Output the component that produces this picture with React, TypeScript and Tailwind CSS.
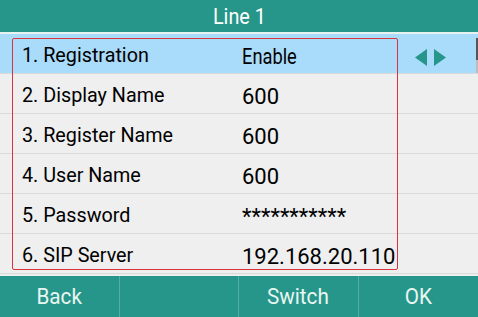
import React from 'react';

const rows = [
  { label: '1. Registration', value: 'Enable', narrow: true },
  { label: '2. Display Name', value: '600', narrow: false },
  { label: '3. Register Name', value: '600', narrow: false },
  { label: '4. User Name', value: '600', narrow: false },
  { label: '5. Password', value: '***********', narrow: false },
  { label: '6. SIP Server', value: '192.168.20.110', narrow: false },
];

const keys = ['Back', '', 'Switch', 'OK'];

const App: React.FC = () => {
  return (
    <div className="w-[478px] h-[317px] overflow-hidden flex flex-col bg-[#efefef] font-['Roboto',sans-serif] relative">
      <div className="h-[32px] bg-[#27968a] flex items-center justify-center text-white text-[22px] pt-[1px]">
        <span className="inline-block scale-x-[0.9]">Line 1</span>
      </div>
      <div className="h-[2px] bg-[#e6f2f0]" />
      <div className="flex flex-col flex-1 relative">
        {rows.map((row, i) => (
          <div
            key={row.label}
            className={`h-[40px] flex items-center border-b border-[#dadada] relative pt-[5px] ${
              i === 0 ? 'bg-[#a9dbfa]' : 'bg-[#efefef]'
            }`}
          >
            <div className="pl-[22px] w-[242px] text-[21px] text-black">
              <span className="inline-block origin-left scale-x-[0.94] whitespace-nowrap">{row.label}</span>
            </div>
            <span
              className={`inline-block origin-left text-[22px] text-black whitespace-nowrap ${
                row.narrow ? 'scale-x-[0.83]' : ''
              }`}
            >
              {row.value}
            </span>
            {i === 0 && (
              <>
                <svg className="absolute left-[415px] top-[15px]" width="32" height="17" viewBox="0 0 32 17">
                  <polygon points="12,0 12,17 0,8.5" fill="#27968a" />
                  <polygon points="19,0 19,17 31,8.5" fill="#27968a" />
                </svg>
                <div className="absolute right-0 top-[4px] w-[2px] h-[22px] bg-[#555]" />
                <div className="absolute right-0 top-[26px] w-[2px] h-[13px] bg-[#bbb]" />
              </>
            )}
          </div>
        ))}
        <div className="absolute left-[12px] top-[4px] w-[386px] h-[232px] border border-[#d8343c] rounded-[2px] pointer-events-none" />
      </div>
      <div className="h-[41px] bg-[#27968a] grid grid-cols-4">
        {keys.map((k, i) => (
          <div
            key={i}
            className={`flex items-center justify-center text-[22px] text-[#e9f6f2] ${
              i < 3 ? 'border-r border-[#4fb0a4]' : ''
            }`}
          >
            <span className="inline-block scale-x-[0.94]">{k}</span>
          </div>
        ))}
      </div>
    </div>
  );
};

export default App;
